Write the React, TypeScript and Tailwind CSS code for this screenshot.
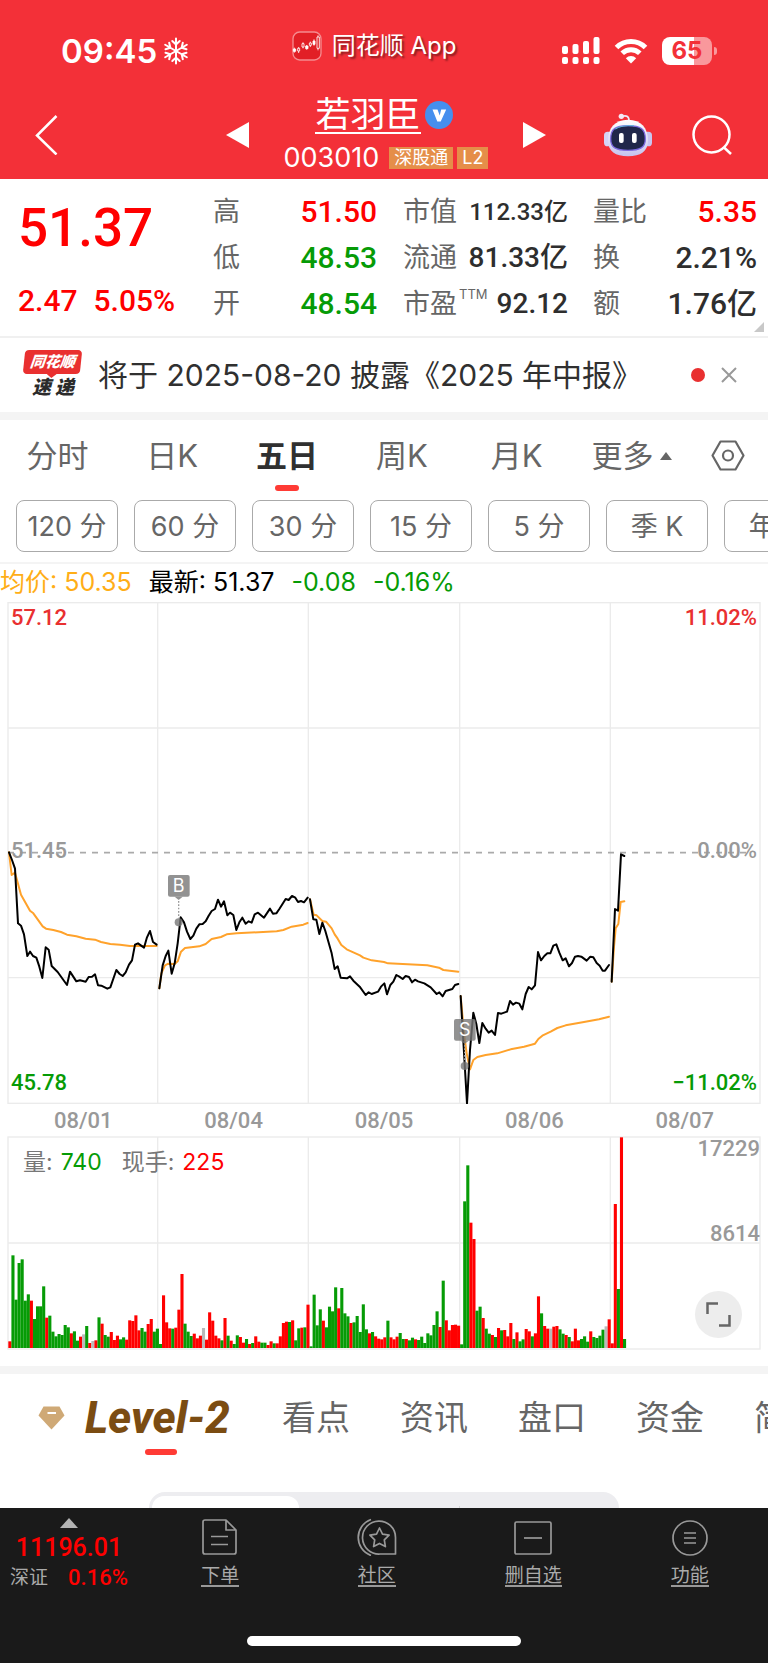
import React from "react";

type Session = { offset: number; price: string; average: string };

// Chart geometry uses three units per pixel of a 768px wide page.
const sessions: Session[] = [
  {
    offset: 0,
    price:
      "27,97 36,120 45,146 54,310 63,317 72,343 82,408 90,395 99,408 109,413 118,440 127,474 137,382 146,389 155,438 173,456 201,495 210,455 229,484 240,481 257,485 266,471 276,470 285,463 294,496 304,497 322,506 331,502 349,450 359,462 368,468 377,457 387,434 396,421 405,374 414,370 432,383 441,352 450,333 459,366 470,374",
    average:
      "27,97 35,165 45,158 63,224 90,272 100,280 128,319 138,326 160,330 183,336 201,344 229,349 257,356 285,359 303,366 331,372 360,374 390,378 470,378",
  },
  {
    offset: 0,
    price:
      "478,505 488,436 497,408 505,392 515,461 524,430 533,370 542,292 552,307 561,335 571,357 580,347 589,326 598,313 608,312 617,304 626,287 635,273 645,267 654,239 663,260 672,244 682,286 690,278 700,285 709,330 718,307 727,293 737,311 746,304 755,308 764,283 774,278 792,293 810,266 819,281 829,280 838,267 857,237 866,240 876,228 886,233 894,246 903,243 912,247 923,233",
    average:
      "478,505 484,460 495,436 505,431 524,432 533,424 543,395 555,384 598,379 617,372 635,357 663,351 680,343 710,340 830,334 850,330 875,320 910,314 923,309",
  },
  {
    offset: 0,
    price:
      "930,238 940,298 949,299 958,342 967,308 976,333 995,400 1004,447 1013,439 1022,473 1041,475 1050,469 1060,482 1079,500 1097,525 1106,517 1115,522 1134,515 1143,500 1153,490 1161,523 1171,495 1180,485 1189,465 1198,470 1208,477 1217,468 1227,471 1236,487 1245,479 1254,484 1273,490 1292,502 1310,522 1318,517 1328,529 1337,513 1357,507 1365,495 1375,492",
    average:
      "930,238 941,284 950,286 967,303 978,305 995,325 1004,343 1013,356 1024,375 1040,388 1060,397 1080,406 1090,413 1115,421 1152,426 1164,430 1282,436 1317,443 1330,450 1375,455",
  },
  {
    offset: 1152,
    price:
      "230,528 249,850 258,690 268,578 277,612 286,669 295,609 305,626 314,638 323,632 333,645 342,579 352,581 369,575 378,543 387,554 396,548 406,551 415,568 425,522 434,501 443,508 453,496 462,396 471,421 481,408 490,400 499,400 508,377 517,373 526,398 536,421 545,415 555,439 564,429 573,410 582,408 592,410 608,422 619,410 628,412 638,429 647,437 656,452 663,452 675,435",
    average:
      "230,528 240,640 248,700 258,748 268,720 280,711 305,705 340,700 380,688 420,680 453,671 463,657 475,647 500,635 520,624 545,616 600,606 645,598 675,590",
  },
  {
    offset: 1152,
    price: "683,485 693,267 702,272 711,103 721,108",
    average: "683,485 690,380 695,325 703,312 710,246 721,244",
  },
];

// r = up, g = down, n = unchanged
const volumes = (
  "r20 g278 g145 g255 g266 g142 g161 r142 g87 g125 g125 g185 r91 g97 g49 g35 g42 g39 g69 g62 r44 g50 g22 r34 n41 g66 r15 n21 r23 g92 r73 g39 g34 r48 r24 r37 g26 g32 r25 r83 r81 r98 r53 g60 g49 r72 r87 g49 g58 " +
  "g12 r158 r77 r59 g58 r61 r115 r222 g73 g49 g36 r43 r29 r37 n60 r25 r107 r82 r37 r29 g23 r90 g37 r22 g12 g38 r33 r16 g27 r12 g15 r35 r19 g16 g16 r9 r20 g14 r14 r35 r75 r79 g78 r83 g23 g59 r61 g62 r130 " +
  "g5 g160 g68 g116 r82 g62 g124 g110 g182 r119 g180 g104 g95 r75 g77 g96 g48 g131 g56 r44 g48 r35 r28 r26 r32 g82 r32 r26 r34 g45 g27 r27 g23 g31 r26 g24 g34 g15 g44 g38 g69 g110 r63 g202 r83 r53 r69 r70 r67 " +
  "g11 g440 g548 r376 r327 g112 g124 r90 g58 g43 r39 g33 r60 g53 r54 r35 r75 g27 r47 g20 g26 r57 r50 g35 r44 r155 g104 r66 r58 n58 r64 r66 g56 g43 r39 g33 r20 r58 r23 g27 g35 g19 r50 g33 g30 g37 g55 n65 r86 " +
  "r14 r432 g177 r632 g27"
).split(" ");

const barColor: Record<string, string> = { r: "#ff0000", g: "#069b06", n: "#b9b9b9" };
const dayLines = [473, 925, 1379, 1831];

function StatusBar() {
  return (
    <div className="relative flex h-[90px] items-start justify-between pl-[61px] pr-[51px] pt-[31px] text-white">
      <div className="flex h-10 items-center gap-1.5">
        <span className="text-[33px] font-semibold leading-10">09:45</span>
        <svg width="26" height="28" viewBox="0 0 26 28" fill="none" stroke="currentColor" strokeWidth="2" strokeLinecap="round" aria-hidden="true">
          {[0, 60, 120, 180, 240, 300].map((a) => (
            <path key={a} d="M13 14V1.500M13 7.500L9.300 4M13 7.500L16.700 4" transform={`rotate(${a} 13 14)`} />
          ))}
        </svg>
      </div>
      <div className="absolute inset-x-0 top-7 flex h-9 items-center justify-center gap-2.5 pr-5">
        <svg width="30" height="30" viewBox="0 0 90 90" aria-hidden="true">
          <rect x="3" y="3" width="84" height="84" rx="20" fill="#e21f26" stroke="#f58b8f" strokeWidth="4" />
          <g stroke="#fff" strokeWidth="2.500" fill="none">
            <path d="M7 50V65M20 48V66M33 34V52M44 42V56M55 32V48M66 25V44M78 13V58" />
            <path fill="#fff" d="M4 54h7v7h-7zM41 45h7v8h-7zM63 30h6v10h-6z" />
            <path fill="#e21f26" d="M17 52h6v8h-6zM30 38h6v10h-6zM52 36h6v7h-6zM75 18h7v34h-7z" />
          </g>
        </svg>
        <span className="text-2xl leading-9 [text-shadow:2px_2px_2px_rgba(0,0,0,0.45)]">同花顺 App</span>
      </div>
      <div className="flex h-10 items-center gap-3.5">
        <svg width="38" height="28" viewBox="0 0 38 28" fill="currentColor" aria-hidden="true">
          <rect x="0" y="9" width="6" height="8" rx="2" />
          <rect x="10.500" y="7" width="6" height="10" rx="2" />
          <rect x="21" y="4" width="6" height="13" rx="2" />
          <rect x="31.500" y="0" width="6" height="17" rx="2" />
          <rect x="0" y="20" width="6" height="7" rx="2" />
          <rect x="10.500" y="20" width="6" height="7" rx="2" />
          <rect x="21" y="20" width="6" height="7" rx="2" />
          <rect x="31.500" y="20" width="6" height="7" rx="2" />
        </svg>
        <svg width="34" height="26" viewBox="0 0 34 26" aria-hidden="true">
          <g fill="none" stroke="currentColor" strokeWidth="5">
            <path d="M2.500 9.500a20.500 20.500 0 0 1 29 0" />
            <path d="M8.200 15.300a12.500 12.500 0 0 1 17.600 0" />
          </g>
          <path d="M17 25.500l-5.200-5.300a7.400 7.400 0 0 1 10.400 0z" fill="currentColor" />
        </svg>
        <div className="flex items-center gap-0.5">
          <span className="h-7 w-[50px] rounded-lg bg-linear-to-r from-white from-65% to-[#f9989c] to-65% text-center text-2xl font-bold leading-7 text-[#f33038]">65</span>
          <span className="h-2 w-[3px] rounded-r-full bg-[#f9989c]" />
        </div>
      </div>
    </div>
  );
}

function NavBar() {
  return (
    <div className="flex h-[89px] items-center justify-between pl-[35px] pr-9 text-white">
      <button aria-label="返回" className="w-[23px]">
        <svg width="23" height="40" viewBox="0 0 23 40" fill="none" stroke="currentColor" strokeWidth="2.500" aria-hidden="true">
          <path d="M21.500 1L2 20.500 21.500 39.500" />
        </svg>
      </button>
      <div className="ml-[168px] flex w-80 items-center justify-between">
        <button aria-label="上一只">
          <svg width="23" height="26" viewBox="0 0 23 26" fill="currentColor" aria-hidden="true"><path d="M0 13L23 0V26z" /></svg>
        </button>
        <div className="flex flex-col items-center gap-2">
          <div className="flex items-center gap-1 pr-1">
            <h1 className="border-b-2 border-white text-[35px] leading-[36px]">若羽臣</h1>
            <svg width="28" height="28" viewBox="0 0 28 28" aria-hidden="true">
              <circle cx="14" cy="14" r="14" fill="#468fee" />
              <path d="M7.500 8.500h5l2.200 6 1.500-6h5L15.700 20.500h-3.400z" fill="#fff" />
            </svg>
          </div>
          <div className="flex items-center gap-1">
            <span className="mr-1.5 text-[27px] leading-8">003010</span>
            <span className="bg-[#e58e49] px-[5px] text-lg leading-[22px]">深股通</span>
            <span className="bg-[#e58e49] px-[5px] text-lg leading-[22px]">L2</span>
          </div>
        </div>
        <button aria-label="下一只">
          <svg width="23" height="26" viewBox="0 0 23 26" fill="currentColor" aria-hidden="true"><path d="M23 13L0 0V26z" /></svg>
        </button>
      </div>
      <div className="ml-auto flex items-center gap-10">
        <button aria-label="智能助手">
          <svg width="48" height="44" viewBox="0 0 144 132" aria-hidden="true">
            <defs>
              <linearGradient id="shell" x1="0" y1="0" x2="0" y2="1">
                <stop offset="0" stopColor="#fff" />
                <stop offset="1" stopColor="#c5c3ee" />
              </linearGradient>
            </defs>
            <path d="M54 10C68 6 76 10 75 26" fill="none" stroke="#ece9fa" strokeWidth="5" />
            <circle cx="52" cy="10" r="8" fill="#f5e8f5" />
            <rect x="0" y="56" width="24" height="44" rx="11" fill="#d5d3f6" />
            <rect x="120" y="56" width="24" height="44" rx="11" fill="#c9c5f0" />
            <path d="M72 20C112 20 132 46 132 82C132 116 110 130 72 130C34 130 12 116 12 82C12 46 32 20 72 20z" fill="url(#shell)" />
            <path d="M72 38C110 38 124 48 124 78C124 104 108 112 72 112C36 112 20 104 20 78C20 48 34 38 72 38z" fill="#20274a" stroke="#7c6ae0" strokeWidth="4" />
            <path d="M34 48Q52 36 90 38" fill="none" stroke="#62b8d8" strokeWidth="3" />
            <rect x="45" y="60" width="14" height="30" rx="6" fill="#fff" />
            <rect x="84" y="60" width="14" height="30" rx="6" fill="#fff" />
          </svg>
        </button>
        <button aria-label="搜索">
          <svg width="40" height="40" viewBox="0 0 40 40" fill="none" stroke="currentColor" strokeWidth="2.500" aria-hidden="true">
            <circle cx="19.500" cy="19.500" r="18" />
            <path d="M31.500 32L39 39" />
          </svg>
        </button>
      </div>
    </div>
  );
}

const num = "font-['Roboto','Noto_Sans_CJK_SC',sans-serif] font-medium";

function Stat({ label, sup, value, tone, size }: { label: string; sup?: string; value: string; tone: string; size?: string }) {
  return (
    <div className="flex h-[46px] items-center justify-between">
      <dt className="flex text-[27px] leading-8 text-[#666]">
        {label}
        {sup && <sup className="top-0 ml-0.5 text-[13px] leading-3">{sup}</sup>}
      </dt>
      <dd className={`${num} whitespace-nowrap leading-8 ${size ?? "text-[30px]"} ${tone}`}>{value}</dd>
    </div>
  );
}

function Quote() {
  return (
    <section className="relative flex h-[159px] border-b-2 border-[#f0f0f0] pl-[18px] pr-[11px] pt-[10px]">
      <div className={`${num} w-[195px] text-[#ff0000]`}>
        <p className="mt-1 text-[53px] leading-[70px]">51.37</p>
        <p className="mt-[22px] flex gap-4 text-[30px] leading-8">
          <span>2.47</span>
          <span>5.05%</span>
        </p>
      </div>
      <dl className="w-[164px]">
        <Stat label="高" value="51.50" tone="text-[#ff0000]" />
        <Stat label="低" value="48.53" tone="text-[#069b06]" />
        <Stat label="开" value="48.54" tone="text-[#069b06]" />
      </dl>
      <dl className="ml-[26px] w-[165px]">
        <Stat label="市值" value="112.33亿" tone="text-[#2e2e2e]" size="text-[24px]" />
        <Stat label="流通" value="81.33亿" tone="text-[#2e2e2e]" size="text-[28px]" />
        <Stat label="市盈" sup="TTM" value="92.12" tone="text-[#2e2e2e]" size="text-[28px]" />
      </dl>
      <dl className="ml-[25px] flex-1">
        <Stat label="量比" value="5.35" tone="text-[#ff0000]" />
        <Stat label="换" value="2.21%" tone="text-[#2e2e2e]" />
        <Stat label="额" value="1.76亿" tone="text-[#2e2e2e]" />
      </dl>
      <svg className="absolute bottom-1 right-1" width="10" height="10" viewBox="0 0 10 10" aria-hidden="true"><path d="M10 0V10H0z" fill="#c8c8c8" /></svg>
    </section>
  );
}

function Notice() {
  return (
    <section className="flex h-[82px] items-center border-b-8 border-[#f4f4f4] pl-6 pr-[31px]">
      <div className="flex w-[58px] flex-col items-center italic">
        <span className="relative -skew-x-6 rounded-sm bg-[#e93030] px-1.5 text-[15px] font-black leading-6 text-white">
          同花顺
          <svg className="absolute left-6 top-full" width="10" height="4" viewBox="0 0 10 4" aria-hidden="true"><path d="M0 0H10L5 4z" fill="#e93030" /></svg>
        </span>
        <span className="mt-0.5 flex gap-1 text-[19px] font-black leading-6 text-[#2b2b2b]"><span>速</span><span>递</span></span>
      </div>
      <p className="ml-4 flex-1 whitespace-nowrap text-[30px] leading-10 text-[#303030]">将于 2025-08-20 披露《2025 年中报》</p>
      <span className="size-3.5 rounded-full bg-[#e93030]" />
      <button aria-label="关闭" className="ml-4">
        <svg width="16" height="16" viewBox="0 0 16 16" fill="none" stroke="#999" strokeWidth="2" aria-hidden="true"><path d="M1 1L15 15M15 1L1 15" /></svg>
      </button>
    </section>
  );
}

const intervals = ["120 分", "60 分", "30 分", "15 分", "5 分", "季 K", "年 K"];

function Periods() {
  const tab = "flex-1 whitespace-nowrap text-center";
  return (
    <section className="border-b-2 border-[#f4f4f4]">
      <div className="flex h-20 items-start pr-[23px] text-[31px] leading-[71px] text-[#666]">
        <button className={tab}>分时</button>
        <button className={tab}>日K</button>
        <button className="relative flex-1 whitespace-nowrap text-center font-bold text-[#303030]">
          五日
          <span className="absolute bottom-0 left-1/2 h-1.5 w-6 -translate-x-1/2 rounded-full bg-[#ff3b35]" />
        </button>
        <button className={tab}>周K</button>
        <button className={tab}>月K</button>
        <button className="flex flex-1 items-center justify-center gap-1.5 whitespace-nowrap">
          更多
          <svg width="12" height="8" viewBox="0 0 12 8" aria-hidden="true"><path d="M6 0L12 8H0z" fill="#666" /></svg>
        </button>
        <button aria-label="设置" className="ml-[22px] flex h-[70px] items-center">
          <svg width="34" height="31" viewBox="0 0 34 31" fill="none" stroke="#666" strokeWidth="2.200" strokeLinejoin="round" aria-hidden="true">
            <path d="M9.500 1.500H24.500L32.500 15.500 24.500 29.500H9.500L1.500 15.500z" />
            <circle cx="17" cy="15.500" r="5" />
          </svg>
        </button>
      </div>
      <div className="flex gap-4 overflow-hidden pb-[10px] pl-4">
        {intervals.map((t) => (
          <button key={t} className="h-[52px] w-[102px] shrink-0 rounded-lg border border-[#aaa] text-[27px] leading-[52px] text-[#666]">{t}</button>
        ))}
      </div>
    </section>
  );
}

function Marker({ x, y, dotY, label }: { x: number; y: number; dotY: number; label: string }) {
  return (
    <g fill="#777" fillOpacity="0.8">
      <rect x={x - 32} y={y} width="65" height="65" rx="6" />
      <path d={`M${x - 12} ${y + 65}h24l-12 10z`} />
      <path d={`M${x} ${y + 78}V${dotY - 12}`} stroke="#999" strokeWidth="4" strokeDasharray="5 5" />
      <circle cx={x} cy={dotY} r="12" />
      <text x={x} y={y + 52} fill="#fff" fillOpacity="1" fontSize="54" textAnchor="middle">{label}</text>
    </g>
  );
}

function PriceChart() {
  const label = `${num} flex justify-between text-[22px] leading-7`;
  return (
    <div className="relative">
      <svg className="block h-auto w-full" viewBox="0 0 2304 1506" aria-label="五日走势">
        <g fill="none" stroke="#ebebeb" strokeWidth="4">
          <rect x="24" y="2" width="2256" height="1502" />
          <path d="M24 378H2280M24 1127H2280" />
          {dayLines.map((x) => <path key={x} d={`M${x} 2V1504`} />)}
        </g>
        <path d="M24 752H2256" stroke="#aaa" strokeWidth="5" strokeDasharray="18 18" />
        <g fill="none" strokeLinejoin="round" strokeLinecap="round" strokeWidth="6">
          {sessions.map((s, i) => (
            <g key={i} transform={`translate(${s.offset} 654)`}>
              <polyline points={s.average} stroke="#ffa22b" />
              <polyline points={s.price} stroke="#000" />
            </g>
          ))}
        </g>
        <Marker x={536} y={819} dotY={961} label="B" />
        <Marker x={1394} y={1251} dotY={1392} label="S" />
      </svg>
      <div className="absolute inset-y-0 left-[11px] right-[11px] flex flex-col justify-between pb-[7px] pt-0.5">
        <div className={`${label} text-[#e93030]`}><span>57.12</span><span>11.02%</span></div>
        <div className={`${label} text-[#999]`}><span>51.45</span><span>0.00%</span></div>
        <div className={`${label} text-[#069b06]`}><span>45.78</span><span>−11.02%</span></div>
      </div>
    </div>
  );
}

function VolumeChart() {
  return (
    <div className="relative">
      <svg className="block h-auto w-full" viewBox="0 0 2304 642" aria-label="成交量">
        <g fill="none" stroke="#ebebeb" strokeWidth="4">
          <rect x="24" y="3" width="2256" height="636" />
          <path d="M24 321H2280" />
          {dayLines.map((x) => <path key={x} d={`M${x} 3V639`} />)}
        </g>
        {volumes.map((v, i) => {
          const h = Number(v.slice(1));
          return <rect key={i} x={25 + i * 9.22} y={636 - h} width="9.300" height={h} fill={barColor[v[0]]} />;
        })}
      </svg>
      <p className="absolute left-[23px] top-2 flex text-[23px] leading-9 text-[#777]">
        量:<span className="ml-2 text-[#069b06]">740</span>
        <span className="ml-5">现手:</span><span className="ml-2 text-[#ff0000]">225</span>
      </p>
      <p className={`${num} absolute right-2 top-0 text-[22px] leading-[26px] text-[#999]`}>17229</p>
      <p className={`${num} absolute bottom-1/2 right-2 text-[22px] leading-[18px] text-[#999]`}>8614</p>
      <button aria-label="全屏" className="absolute bottom-3 right-[26px] flex size-[47px] items-center justify-center rounded-full bg-[#ededed]">
        <svg width="25" height="25" viewBox="0 0 25 25" fill="none" stroke="#666" strokeWidth="2.500" aria-hidden="true"><path d="M1.500 12V1.500H12M23.500 13V23.500H13" /></svg>
      </button>
    </div>
  );
}

function DetailTabs() {
  return (
    <section className="overflow-hidden border-t-8 border-[#f4f4f4]">
      <div className="flex h-[118px] items-start text-[#666]">
        <button className="relative flex h-[81px] w-[257px] shrink-0 items-center pl-[38px] pt-1.5">
          <svg width="27" height="24" viewBox="0 0 27 24" aria-hidden="true">
            <path d="M5.500 0.500H21.500L26.500 9.500 13.500 23.500 0.500 9.500z" fill="#cfa976" />
            <path d="M9.500 7H18" stroke="#fff" strokeWidth="2" />
          </svg>
          <span className="ml-5 font-['Roboto',sans-serif] text-[44px] font-extrabold italic leading-[74px] text-[#7b4c12]">Level-2</span>
          <span className="absolute bottom-0 left-[145px] h-1.5 w-8 rounded-full bg-[#ff3b35]" />
        </button>
        {["看点", "资讯", "盘口", "资金", "简况"].map((t) => (
          <button key={t} className="w-[118px] shrink-0 text-center text-[34px] leading-[88px]">{t}</button>
        ))}
      </div>
      <div className="mx-[149px] flex h-4 overflow-hidden rounded-t-2xl bg-[#ededf0] px-[3px] pt-1">
        <span className="h-3 w-[147px] rounded-t-xl bg-white" />
        <span className="ml-auto mr-[156px] mt-2.5 h-0.5 w-px bg-[#d5d5d8]" />
      </div>
    </section>
  );
}

function BottomItem({ label, children }: { label: string; children: React.ReactNode }) {
  return (
    <a href="#" className="flex flex-1 flex-col items-center text-[#999]">
      <svg width="40" height="38" viewBox="0 0 40 38" fill="none" stroke="currentColor" strokeWidth="1.700" strokeLinejoin="round" aria-hidden="true">{children}</svg>
      <span className="mt-2.5 border-b-2 border-[#999] text-[19px] leading-[19px] text-[#aaa]">{label}</span>
    </a>
  );
}

function BottomBar() {
  return (
    <nav className="flex h-[155px] flex-col justify-between bg-[#1a1a1a]">
      <div className="flex pt-[10px]">
        <div className="flex w-[138px] shrink-0 flex-col items-center text-[#ff0000]">
          <svg width="18" height="10" viewBox="0 0 18 10" aria-hidden="true"><path d="M9 0L18 10H0z" fill="#b3b3b3" /></svg>
          <span className={`${num} mt-1 text-[25px] leading-8`}>11196.01</span>
          <div className="flex items-center gap-5">
            <span className="text-[19px] leading-7 text-[#aaa]">深证</span>
            <span className={`${num} text-[22px] leading-7`}>0.16%</span>
          </div>
        </div>
        <div className="flex flex-1 pl-1">
          <BottomItem label="下单">
            <path d="M5 2H26L36 12V34a2 2 0 0 1-2 2H5a2 2 0 0 1-2-2V4a2 2 0 0 1 2-2zM26 2V12H36M11 18.500H28M11 26.500H28" />
          </BottomItem>
          <BottomItem label="社区">
            <path d="M38.500 36H23a16.500 16.500 0 1 1 15.500-16.500zM14 1.500C-3 8-3 31 14 37.500" />
            <path d="M22.500 10l3 6.200 6.600 1-4.800 4.700 1.100 6.700-5.900-3.200-5.900 3.200 1.100-6.700-4.800-4.700 6.600-1z" />
          </BottomItem>
          <BottomItem label="删自选">
            <rect x="2" y="4" width="36" height="32" rx="1.500" />
            <path d="M11 20H29" />
          </BottomItem>
          <BottomItem label="功能">
            <circle cx="20" cy="20" r="17" />
            <path d="M14 15H26M14 20H26M14 25H26" />
          </BottomItem>
        </div>
      </div>
      <span className="mx-auto mb-[17px] h-2.5 w-[274px] rounded-full bg-white" />
    </nav>
  );
}

export default function App() {
  return (
    <div className="overflow-hidden bg-white font-['Inter','Noto_Sans_CJK_SC',sans-serif]">
      <header className="bg-[#f33038]">
        <StatusBar />
        <NavBar />
      </header>
      <main>
        <Quote />
        <Notice />
        <Periods />
        <p className="flex h-[38px] items-center gap-[17px] whitespace-nowrap text-[25px] text-[#069b06]">
          <span className="text-[#ffae17]">均价: 50.35</span>
          <span className="text-black">最新: 51.37</span>
          <span>-0.08</span>
          <span>-0.16%</span>
        </p>
        <PriceChart />
        <div className={`${num} grid h-8 grid-cols-5 px-2 text-center text-[22px] leading-[34px] text-[#999]`}>
          {["08/01", "08/04", "08/05", "08/06", "08/07"].map((d) => <span key={d}>{d}</span>)}
        </div>
        <VolumeChart />
        <div className="h-4" />
        <DetailTabs />
      </main>
      <BottomBar />
    </div>
  );
}
